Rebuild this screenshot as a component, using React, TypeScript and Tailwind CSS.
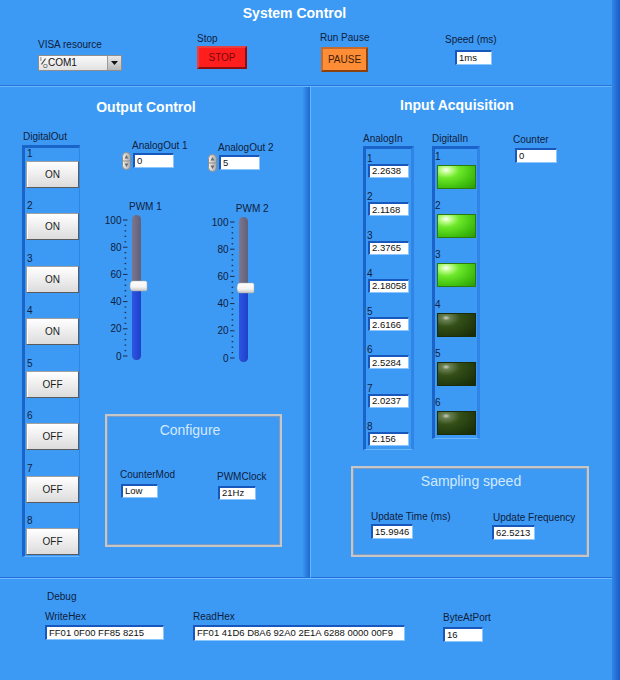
import React from 'react';

const LBL = 'text-[10px] leading-[12px] text-[#10203c] whitespace-nowrap';

const DOUT = ['ON', 'ON', 'ON', 'ON', 'OFF', 'OFF', 'OFF', 'OFF'];
const AIN = ['2.2638', '2.1168', '2.3765', '2.18058', '2.6166', '2.5284', '2.0237', '2.156'];
const DIN = [true, true, true, false, false, false];

function Field({ className, value }: { className: string; value: string }) {
  return (
    <div
      className={`box-border bg-white border-t-2 border-l-2 border-b border-r border-t-[#1858bd] border-l-[#1858bd] border-b-[#8cc6ff] border-r-[#8cc6ff] pl-[2px] flex items-center text-[9.5px] text-[#111] whitespace-nowrap overflow-hidden ${className}`}
    >
      {value}
    </div>
  );
}

function Spinner() {
  return (
    <svg width="9" height="18" viewBox="0 0 9 18" className="block shrink-0">
      <defs>
        <linearGradient id="spinG" x1="0" y1="0" x2="1" y2="0">
          <stop offset="0" stopColor="#f4f4f4" />
          <stop offset="1" stopColor="#a6a6a6" />
        </linearGradient>
      </defs>
      <rect x="0.5" y="0.5" width="8" height="17" rx="4" fill="url(#spinG)" stroke="#8d8d8d" />
      <line x1="1" y1="9" x2="8" y2="9" stroke="#8d8d8d" />
      <path d="M4.5 3 L6.5 6.5 H2.5 Z" fill="#6b6b6b" />
      <path d="M4.5 15 L6.5 11.5 H2.5 Z" fill="#6b6b6b" />
    </svg>
  );
}

function Slider({ value }: { value: number }) {
  const y = (v: number) => 8 + (100 - v) * 1.36;
  const t = y(value);
  const majors = [0, 20, 40, 60, 80, 100];
  const minors: number[] = [];
  for (let v = 0; v < 100; v += 20) for (let k = 1; k < 5; k++) minors.push(v + k * 4);
  return (
    <svg width="45" height="153" viewBox="0 0 45 153" className="block overflow-visible">
      <defs>
        <linearGradient id="trkGray" x1="0" y1="0" x2="1" y2="0">
          <stop offset="0" stopColor="#7a7791" />
          <stop offset="1" stopColor="#625f79" />
        </linearGradient>
        <linearGradient id="trkBlue" x1="0" y1="0" x2="1" y2="0">
          <stop offset="0" stopColor="#2d55e4" />
          <stop offset="1" stopColor="#1e40c9" />
        </linearGradient>
        <linearGradient id="thumbG" x1="0" y1="0" x2="0" y2="1">
          <stop offset="0" stopColor="#ffffff" />
          <stop offset="0.6" stopColor="#f4f4f4" />
          <stop offset="1" stopColor="#c4c4c4" />
        </linearGradient>
      </defs>
      <rect x="26" y="3" width="9" height="145" rx="4.5" fill="url(#trkGray)" />
      <path d={`M26 ${t} H35 V143.5 A4.5 4.5 0 0 1 26 143.5 Z`} fill="url(#trkBlue)" />
      {majors.map((v) => (
        <g key={v}>
          <line x1="17" x2="21.5" y1={y(v)} y2={y(v)} stroke="#1d2c48" strokeWidth="1" />
          <text
            x="15.5"
            y={y(v) + 3.6}
            textAnchor="end"
            fontSize="10"
            fill="#10203c"
            fontFamily="Liberation Sans, Arial, sans-serif"
          >
            {v}
          </text>
        </g>
      ))}
      {minors.map((v) => (
        <rect key={v} x="18.6" y={y(v) - 0.6} width="1.6" height="1.2" fill="#1d2c48" />
      ))}
      <path
        d={`M27 ${t - 5} H39.5 Q41 ${t - 5} 41 ${t - 3.5} V${t + 3.5} Q41 ${t + 5} 39.5 ${t + 5} H27 Q24 ${t + 5} 24 ${t} Q24 ${t - 5} 27 ${t - 5} Z`}
        fill="url(#thumbG)"
        stroke="#a8a8a8"
        strokeWidth="0.5"
      />
    </svg>
  );
}

function Toggle({ label }: { label: string }) {
  return (
    <div className="ml-[1px] mt-[1px] w-[53px] h-[27px] box-border flex items-center justify-center bg-gradient-to-b from-[#ffffff] to-[#dcdcdc] border border-[#a0a0a0] border-b-[#5a5a5a] border-r-[#5a5a5a] shadow-[inset_1px_1px_0_#ffffff] text-[10px] text-[#1c1c1c]">
      {label}
    </div>
  );
}

function Led({ on }: { on: boolean }) {
  return (
    <div
      className={
        on
          ? 'ml-[2px] mt-[3px] w-[39px] h-[24px] box-border border border-[#2c7a0c] bg-[radial-gradient(ellipse_at_22%_18%,#ffffff_0%,#c8ff9a_10%,#6ee82a_32%,#3fc00e_70%,#2c9a06_100%)]'
          : 'ml-[2px] mt-[3px] w-[39px] h-[24px] box-border border border-[#1a2c0a] bg-[radial-gradient(ellipse_at_22%_18%,#c9d2bf_0%,#6a7f52_10%,#344f18_34%,#223a0e_70%,#15260a_100%)]'
      }
    />
  );
}

function AnalogOut({ label, value, className }: { label: string; value: string; className: string }) {
  return (
    <div className={`flex flex-col w-[70px] ${className}`}>
      <div className={`${LBL} ml-[10px]`}>{label}</div>
      <div className="flex items-start">
        <Spinner />
        <Field className="ml-[2px] mt-[1px] w-[41px] h-[15px]" value={value} />
      </div>
    </div>
  );
}

export default function App() {
  return (
    <div className="w-[620px] h-[680px] flex bg-[#3c9af5] overflow-hidden font-['Liberation_Sans',Arial,sans-serif]">
      <div className="w-[612px] h-full flex flex-col">
        {/* System Control */}
        <div className="h-[86px] shrink-0 flex flex-col border-b border-[#2776da]">
          <div className="pt-[5px] pr-[23px] text-center text-[14px] leading-[17px] font-bold text-white">
            System Control
          </div>
          <div className="flex items-start">
            <div className="ml-[38px] mt-[17px] w-[84px] flex flex-col">
              <div className={LBL}>VISA resource</div>
              <div className="mt-[4px] w-[84px] h-[16px] box-border flex bg-gradient-to-b from-[#fafafa] to-[#e2e2e2] border border-[#8e8e8e]">
                <span className="relative w-[9px] h-full shrink-0 text-[#333]">
                  <span className="absolute left-[1px] top-[0px] text-[6px] leading-[6px]">I</span>
                  <span className="absolute left-[1px] top-[5px] w-[7px] h-px bg-[#444] rotate-[-55deg]" />
                  <span className="absolute left-[4px] top-[7px] text-[6px] leading-[6px]">O</span>
                </span>
                <span className="flex-1 text-[10px] leading-[14px] text-[#111]">COM1</span>
                <span className="w-[14px] h-full shrink-0 bg-gradient-to-b from-[#e8e8e8] to-[#b8b8b8] border-l border-[#9a9a9a] flex items-center justify-center">
                  <svg width="7" height="4" viewBox="0 0 7 4">
                    <path d="M0 0 H7 L3.5 4 Z" fill="#111" />
                  </svg>
                </span>
              </div>
            </div>
            <div className="ml-[75px] mt-[11px] w-[50px] flex flex-col">
              <div className={LBL}>Stop</div>
              <div className="mt-[1px] w-[50px] h-[23px] box-border flex items-center justify-center bg-[#ff1e1e] border-2 border-[#e84040] border-b-[#8e0c0c] border-r-[#8e0c0c] text-[10px] text-[#7a0808]">
                STOP
              </div>
            </div>
            <div className="ml-[73px] mt-[10px] w-[48px] flex flex-col">
              <div className={LBL}>Run Pause</div>
              <div className="ml-[1px] mt-[3px] w-[47px] h-[25px] box-border flex items-center justify-center bg-[#ff8d36] border-2 border-[#c86a2a] border-b-[#8a4210] border-r-[#8a4210] text-[10px] text-[#3d1e06]">
                PAUSE
              </div>
            </div>
            <div className="ml-[77px] mt-[12px] w-[50px] flex flex-col">
              <div className={LBL}>Speed (ms)</div>
              <Field className="ml-[10px] mt-[4px] w-[37px] h-[15px]" value="1ms" />
            </div>
          </div>
        </div>

        <div className="h-[492px] shrink-0 flex">
          {/* Output Control */}
          <div className="w-[310px] h-full box-border flex border-t border-b border-t-[#68b4fd] border-b-[#2270d6]">
            <div className="w-[303px] flex flex-col">
              <div className="mt-[12px] pr-[11px] text-center text-[14px] leading-[17px] font-bold text-white">
                Output Control
              </div>
              <div className="flex items-start">
                <div className="ml-[22px] mt-[15px] w-[58px] flex flex-col">
                  <div className={`${LBL} ml-[1px]`}>DigitalOut</div>
                  <div className="mt-[2px] h-[412px] box-border flex flex-col gap-[12.43px] border-l-[3px] border-t-[3px] border-r border-b border-l-[#1a63c9] border-t-[#1a63c9] border-r-[#2f84e6] border-b-[#6ab6ff]">
                    {DOUT.map((s, i) => (
                      <div key={i} className="flex flex-col">
                        <div className={`${LBL} pl-[2px]`}>{i + 1}</div>
                        <Toggle label={s} />
                      </div>
                    ))}
                  </div>
                </div>

                <div className="ml-[25px] w-[180px] flex flex-col">
                  <div className="flex items-start">
                    <AnalogOut className="ml-[17px] mt-[24px]" label="AnalogOut 1" value="0" />
                    <AnalogOut className="ml-[16px] mt-[26px]" label="AnalogOut 2" value="5" />
                  </div>

                  <div className="mt-[30px] flex items-start">
                    <div className="ml-[1px] flex flex-col">
                      <div className="ml-[23px] text-[10px] leading-[10px] text-[#10203c]">PWM 1</div>
                      <Slider value={51.5} />
                    </div>
                    <div className="ml-[51px] mt-[2px] flex flex-col">
                      <div className="ml-[23px] text-[10px] leading-[10px] text-[#10203c]">PWM 2</div>
                      <Slider value={51.5} />
                    </div>
                  </div>

                  <div className="mt-[47px] w-[177px] h-[133px] box-border flex flex-col border-2 border-[#c6c6c6] shadow-[inset_0_0_0_1px_#7d9cc4]">
                    <div className="pt-[6px] pr-[7px] text-center text-[14px] leading-[17px] text-[#d2e9ff]">Configure</div>
                    <div className="mt-[30px] flex items-start">
                      <div className="ml-[13px] w-[60px] flex flex-col">
                        <div className={LBL}>CounterMod</div>
                        <Field className="ml-[1px] mt-[3px] w-[37px] h-[14px]" value="Low" />
                      </div>
                      <div className="ml-[37px] mt-[2px] flex flex-col">
                        <div className={LBL}>PWMClock</div>
                        <Field className="ml-[1px] mt-[3px] w-[38px] h-[14px]" value="21Hz" />
                      </div>
                    </div>
                  </div>
                </div>
              </div>
            </div>
            <div className="w-[7px] h-full bg-gradient-to-r from-[#3993ee] to-[#1f69d0]" />
          </div>

          {/* Input Acquisition */}
          <div className="flex-1 h-full box-border flex flex-col border-t border-b border-l border-t-[#68b4fd] border-b-[#2270d6] border-l-[#6ab6ff]">
            <div className="mt-[10px] pr-[9px] text-center text-[14px] leading-[17px] font-bold text-white">
              Input Acquisition
            </div>
            <div className="mt-[19px] flex items-start">
              <div className="ml-[52px] w-[51px] flex flex-col">
                <div className={LBL}>AnalogIn</div>
                <div className="mt-[1px] h-[304px] box-border pt-[4px] flex flex-col gap-[13.3px] border-l-[3px] border-t-[3px] border-r-[3px] border-b border-l-[#1a63c9] border-t-[#1a63c9] border-r-[#2f84e6] border-b-[#6ab6ff]">
                  {AIN.map((v, i) => (
                    <div key={i} className="flex flex-col">
                      <div className="pl-[1px] text-[10px] leading-[11px] text-[#10203c]">{i + 1}</div>
                      <Field className="ml-[2px] w-[41px] h-[14px]" value={v} />
                    </div>
                  ))}
                </div>
              </div>
              <div className="ml-[18px] w-[48px] flex flex-col">
                <div className={LBL}>DigitalIn</div>
                <div className="mt-[1px] h-[293px] box-border pt-[2px] flex flex-col gap-[11.2px] border-l-[3px] border-t-[3px] border-r-[3px] border-b border-l-[#1a63c9] border-t-[#1a63c9] border-r-[#2f84e6] border-b-[#6ab6ff]">
                  {DIN.map((on, i) => (
                    <div key={i} className="flex flex-col">
                      <div className="text-[10px] leading-[11px] text-[#10203c]">{i + 1}</div>
                      <Led on={on} />
                    </div>
                  ))}
                </div>
              </div>
              <div className="ml-[33px] mt-[1px] flex flex-col">
                <div className={LBL}>Counter</div>
                <Field className="ml-[2px] mt-[2px] w-[42px] h-[15px]" value="0" />
              </div>
            </div>

            <div className="ml-[40px] mt-[16px] w-[238px] h-[91px] box-border flex flex-col border-2 border-[#c6c6c6] shadow-[inset_0_0_0_1px_#7d9cc4]">
              <div className="pt-[5px] pl-[2px] text-center text-[14px] leading-[17px] text-[#d2e9ff]">Sampling speed</div>
              <div className="mt-[21px] flex items-start">
                <div className="ml-[18px] w-[82px] flex flex-col">
                  <div className={LBL}>Update Time (ms)</div>
                  <Field className="mt-[1px] w-[42px] h-[15px]" value="15.9946" />
                </div>
                <div className="ml-[39px] mt-[1px] flex flex-col">
                  <div className={`${LBL} ml-[1px]`}>Update Frequency</div>
                  <Field className="mt-[1px] w-[43px] h-[15px]" value="62.5213" />
                </div>
              </div>
            </div>
          </div>
        </div>

        {/* Debug */}
        <div className="flex-1 flex flex-col border-t border-[#70baff]">
          <div className={`${LBL} ml-[47px] mt-[12px]`}>Debug</div>
          <div className="mt-[8px] flex items-start">
            <div className="ml-[45px] w-[119px] flex flex-col">
              <div className={LBL}>WriteHex</div>
              <Field className="mt-[2px] w-[119px] h-[15px]" value="FF01 0F00 FF85 8215" />
            </div>
            <div className="ml-[29px] w-[213px] flex flex-col">
              <div className={LBL}>ReadHex</div>
              <Field className="mt-[2px] w-[212px] h-[16px]" value="FF01 41D6 D8A6 92A0 2E1A 6288 0000 00F9" />
            </div>
            <div className="ml-[37px] mt-[1px] flex flex-col">
              <div className={LBL}>ByteAtPort</div>
              <Field className="mt-[3px] w-[40px] h-[15px]" value="16" />
            </div>
          </div>
        </div>
      </div>
      <div className="w-[8px] h-full bg-gradient-to-r from-[#3186ea] to-[#1b5cc5]" />
    </div>
  );
}
